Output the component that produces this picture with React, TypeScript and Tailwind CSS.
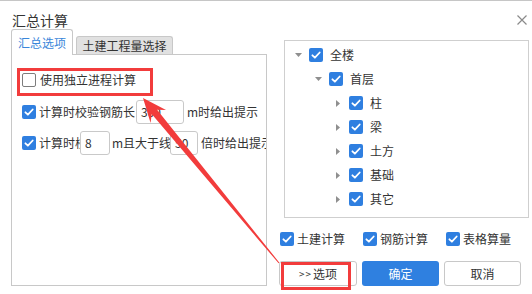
import React from 'react';

// ============================================================================
// SMALL PARTS
// ============================================================================

function Check({ checked = true }: { checked?: boolean }) {
    if (!checked) {
        return <span className="block w-[14px] h-[14px] shrink-0 rounded-[2px] border border-[#7d7d7d] bg-white" />;
    }
    return (
        <svg width="14" height="14" viewBox="0 0 14 14" className="block shrink-0">
            <rect x="0" y="0" width="14" height="14" rx="2" fill="#2f7fe0" />
            <path d="M3.4 7.3 L5.9 9.7 L10.7 4.5" fill="none" stroke="#fff" strokeWidth="1.8" strokeLinecap="round" strokeLinejoin="round" />
        </svg>
    );
}

function Caret({ open }: { open: boolean }) {
    return (
        <span className="w-[10px] h-[10px] shrink-0 flex items-center justify-center">
            {open ? (
                <svg width="7" height="4" viewBox="0 0 7 4"><path d="M0 0 H7 L3.5 4 Z" fill="#8f8f8f" /></svg>
            ) : (
                <svg width="4" height="7" viewBox="0 0 4 7"><path d="M0 0 V7 L4 3.5 Z" fill="#8f8f8f" /></svg>
            )}
        </span>
    );
}

function TreeRow({ level, open, label }: { level: number; open: boolean; label: string }) {
    const pad = ['pl-[8px]', 'pl-[28px]', 'pl-[48px]'][level];
    return (
        <div className={`h-[24px] flex items-center ${pad}`}>
            <Caret open={open} />
            <span className="ml-[6px]"><Check /></span>
            <span className="ml-[7px] text-[12px] leading-none text-[#333]">{label}</span>
        </div>
    );
}

function NumBox({ value, w }: { value: string; w: string }) {
    return (
        <span className={`${w} h-[24px] shrink-0 rounded-[3px] border border-[#c9c9c9] bg-white flex items-center pl-[4px] text-[12px] text-[#333]`}>
            {value}
        </span>
    );
}

function BottomCheck({ label }: { label: string }) {
    return (
        <div className="w-[88px] flex items-center">
            <Check />
            <span className="ml-[3px] text-[12px] leading-none text-[#333]">{label}</span>
        </div>
    );
}

// ============================================================================
// APP
// ============================================================================

export default function App() {
    const tree: { level: number; open: boolean; label: string }[] = [
        { level: 0, open: true, label: '全楼' },
        { level: 1, open: true, label: '首层' },
        { level: 2, open: false, label: '柱' },
        { level: 2, open: false, label: '梁' },
        { level: 2, open: false, label: '土方' },
        { level: 2, open: false, label: '基础' },
        { level: 2, open: false, label: '其它' },
    ];

    return (
        <div className="relative w-[532px] h-[294px] overflow-hidden bg-white border-t border-[#c6c6c6] text-[#333] font-['Noto_Sans_CJK_SC','Noto_Sans',sans-serif]">
            {/* header */}
            <div className="h-[28px] flex items-start justify-between pl-[12px] pr-[5px] pt-[10px]">
                <span className="text-[14px] leading-[18px]">汇总计算</span>
                <svg width="10" height="10" viewBox="0 0 10 10" className="mt-[4px]">
                    <path d="M0.5 0.5 L9.5 9.5 M9.5 0.5 L0.5 9.5" stroke="#8a8a8a" strokeWidth="1.2" />
                </svg>
            </div>

            <div className="flex pl-[11px]">
                {/* left column */}
                <div className="w-[256px] flex flex-col">
                    <div className="h-[26px] flex items-end border-b border-[#c8c8c8]">
                        <div className="w-[62px] h-[26px] -mb-px rounded-t-[3px] border border-b-0 border-[#c8c8c8] bg-white flex items-center justify-center text-[12px] text-[#3a86da]">
                            汇总选项
                        </div>
                        <div className="ml-[3px] w-[97px] h-[18px] rounded-t-[3px] border border-b-0 border-[#c8c8c8] bg-[#e1e1e1] flex items-center justify-center text-[12px] text-[#333]">
                            土建工程量选择
                        </div>
                    </div>
                    <div className="h-[231px] border-x border-b border-[#c8c8c8] overflow-hidden pl-[10px] text-[12px] whitespace-nowrap">
                        <div className="mt-[13px] h-[24px] flex items-center">
                            <Check checked={false} />
                            <span className="ml-[4px]">使用独立进程计算</span>
                        </div>
                        <div className="mt-[8px] h-[24px] flex items-center">
                            <Check />
                            <span className="ml-[3px] w-[96px] shrink-0">计算时校验钢筋长</span>
                            <span className="ml-[1px]"><NumBox value="300" w="w-[48px]" /></span>
                            <span className="ml-[3px] shrink-0">m时给出提示</span>
                        </div>
                        <div className="mt-[7px] h-[24px] flex items-center">
                            <Check />
                            <span className="ml-[3px] w-[41px] shrink-0 overflow-hidden">计算时校验</span>
                            <NumBox value="8" w="w-[30px]" />
                            <span className="ml-[2px] w-[55px] shrink-0">m且大于线</span>
                            <span className="ml-[3px]"><NumBox value="50" w="w-[28px]" /></span>
                            <span className="ml-[3px] shrink-0">倍时给出提示</span>
                        </div>
                    </div>
                </div>

                {/* right column */}
                <div className="ml-[12px] w-[250px] flex flex-col">
                    <div className="ml-[5px] mt-[11px] w-[245px] h-[178px] border border-[#cfcfcf] pt-[2px]">
                        {tree.map((r) => (
                            <TreeRow key={r.label} level={r.level} open={r.open} label={r.label} />
                        ))}
                    </div>
                    <div className="mt-[14px] h-[14px] pl-[1px] flex items-center">
                        <BottomCheck label="土建计算" />
                        <BottomCheck label="钢筋计算" />
                        <BottomCheck label="表格算量" />
                    </div>
                    <div className="mt-[15px] h-[25px] flex gap-[5px] text-[12px]">
                        <button className="w-[78px] h-[25px] rounded-[3px] border border-[#c8c8c8] bg-white text-[#333] flex items-center justify-center">
                            <span className="text-[10px] tracking-[1px] mr-[1px]">&gt;&gt;</span>选项
                        </button>
                        <button className="w-[77px] h-[25px] rounded-[3px] bg-[#2f80e0] text-white flex items-center justify-center">
                            确定
                        </button>
                        <button className="w-[77px] h-[25px] rounded-[3px] border border-[#c8c8c8] bg-white text-[#333] flex items-center justify-center">
                            取消
                        </button>
                    </div>
                </div>
            </div>

            {/* annotations */}
            <div className="absolute left-[17px] top-[67px] w-[136px] h-[28px] border-[3px] border-[#f23c3c]" />
            <div className="absolute left-[281px] top-[261px] w-[70px] h-[28px] border-[3px] border-[#f23c3c]" />
            <svg className="absolute left-0 top-0 pointer-events-none" width="532" height="294" viewBox="0 0 532 294">
                <polygon
                    points="143,97 166,109 157.1,108.7 279.4,261.7 278.6,262.3 151.7,113.1 150.6,122"
                    fill="#f23c3c"
                />
            </svg>
        </div>
    );
}
